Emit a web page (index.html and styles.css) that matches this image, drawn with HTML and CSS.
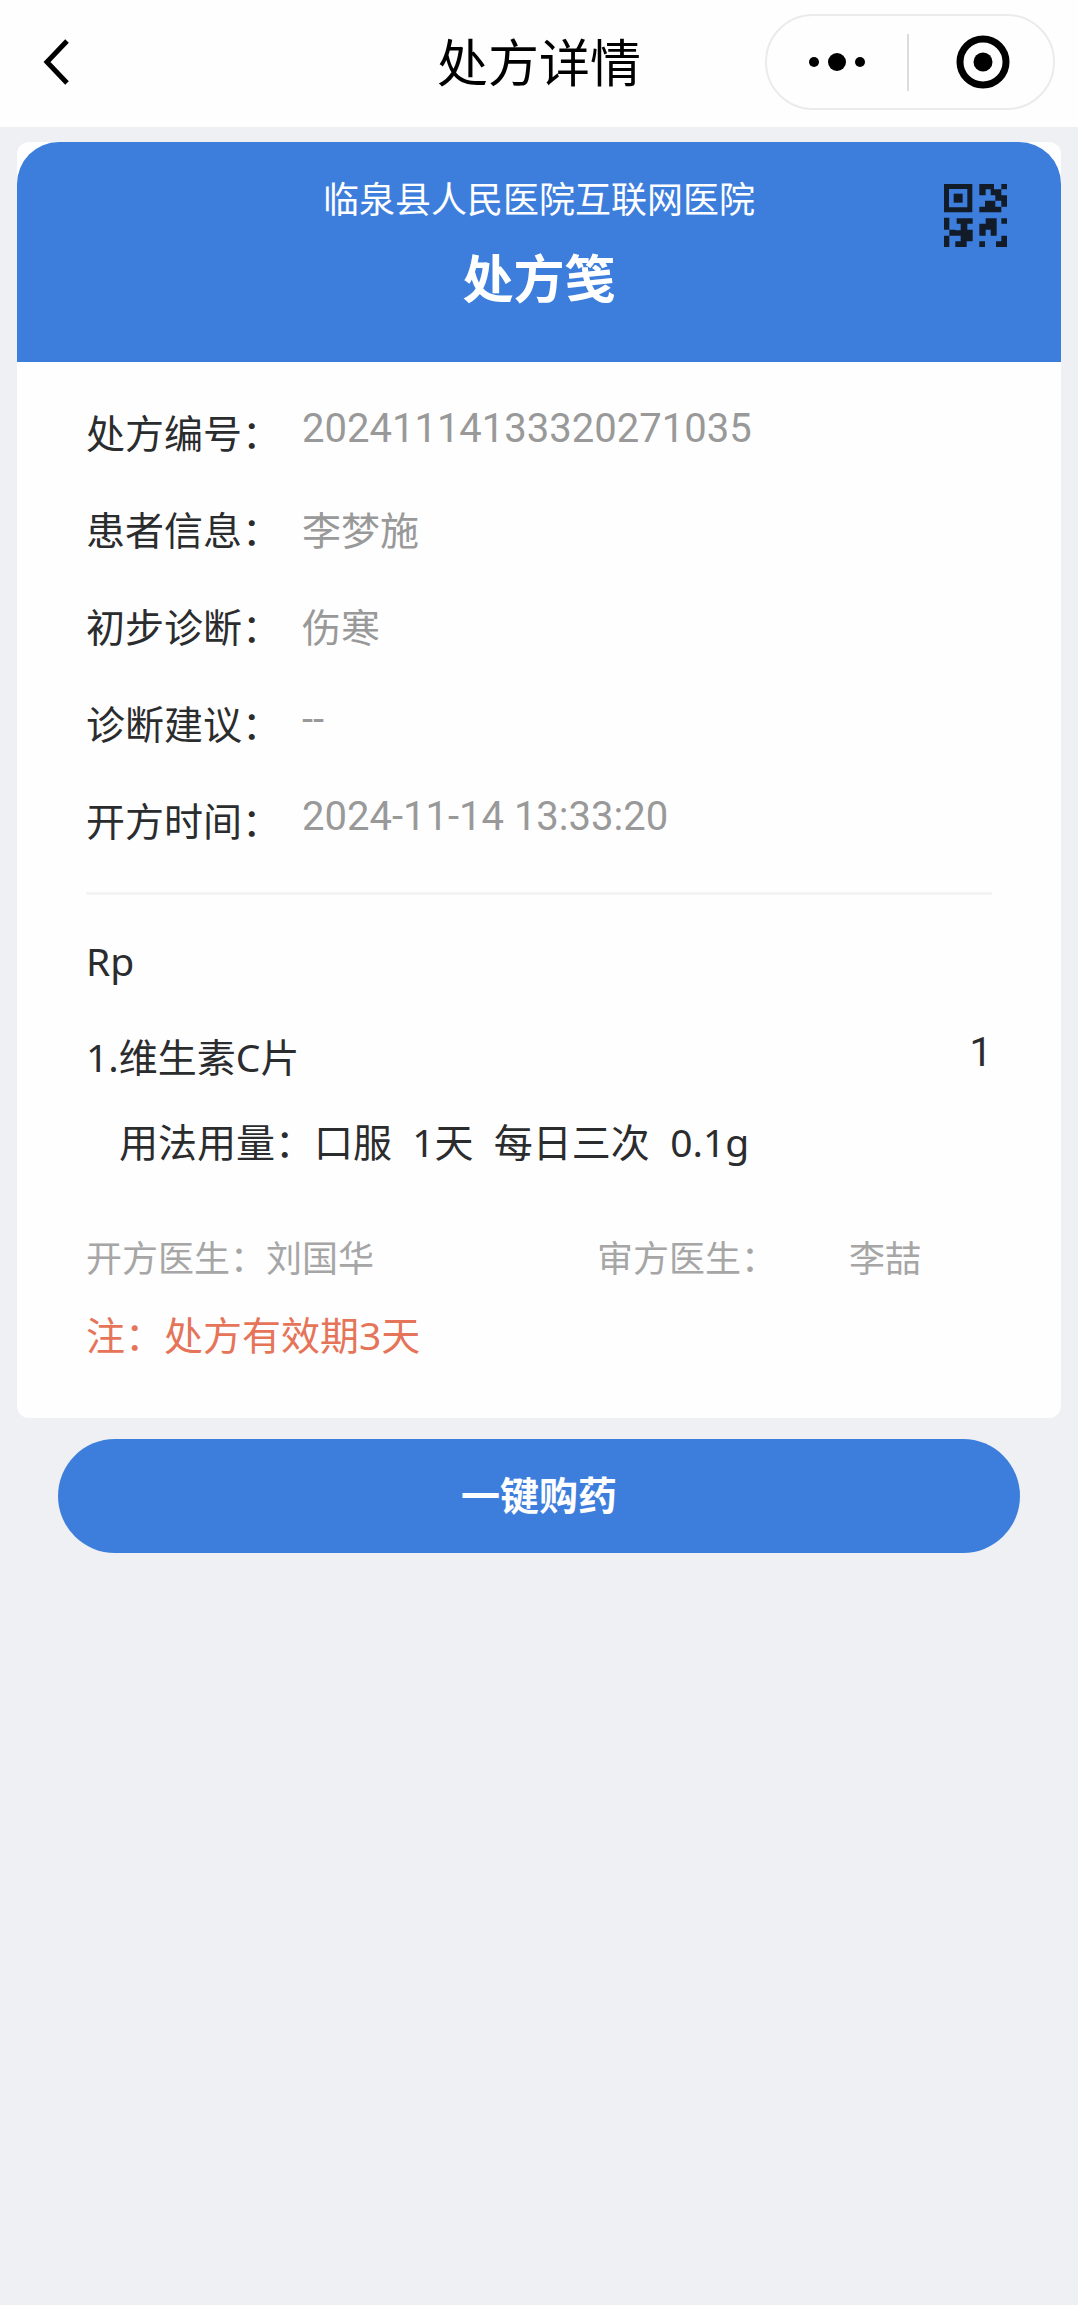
FILE: index.html
```html
<!DOCTYPE html>
<html lang="zh-CN">
<head>
<meta charset="utf-8">
<meta name="viewport" content="width=device-width, initial-scale=1">
<title>处方详情</title>
<link rel="stylesheet" href="styles.css">
</head>
<body>
<header class="topbar">
  <button class="icon-button back" type="button" aria-label="返回">
    <svg width="30" height="50" viewBox="0 0 30 50" fill="none" stroke="#000" stroke-width="5"><path d="M25 4 5 25l20 21"/></svg>
  </button>
  <h1 class="topbar-title">处方详情</h1>
  <div class="capsule">
    <button class="icon-button capsule-button" type="button" aria-label="更多">
      <svg width="56" height="20" viewBox="0 0 56 20"><circle cx="5" cy="10" r="5"/><circle cx="28" cy="10" r="9"/><circle cx="51" cy="10" r="5"/></svg>
    </button>
    <span class="capsule-line"></span>
    <button class="icon-button capsule-button capsule-close" type="button" aria-label="关闭">
      <svg width="54" height="54" viewBox="0 0 54 54"><circle cx="27" cy="27" r="23" fill="none" stroke="#000" stroke-width="7"/><circle cx="27" cy="27" r="9.5"/></svg>
    </button>
  </div>
</header>
<main class="page">
  <article class="card">
    <header class="card-head">
      <p class="hospital">临泉县人民医院互联网医院</p>
      <h2 class="card-title">处方笺</h2>
      <svg class="qr" viewBox="0 0 189 189" role="img" aria-label="二维码">
        <path fill-rule="evenodd" d="M0 0h85v85H0zM15 15v55h55V15z"/>
        <path d="M29 29h27v27H29z"/>
        <path d="M106 0h44v16h-25v18h-19zM172 0h17v16h-17zM140 16h16v18h-16zM154 16h18v18h17v34h-17V50h-18zM123 50h31v18h18v17h-47V68h-2zM106 68h19v17h-19z"/>
        <path d="M0 101h16v36H0zM16 137h18v18H16zM0 155h16v34H0zM38 103h48v16H70v18h16v35H68v17H34v-17h16v-17H34v-16h16v-20H38zM125 103h33v52h-18v-18h-15v18h-19v-36h19zM172 103h17v16h-17zM106 172h17v17h-17zM172 155h17v34h-33v-17h16z"/>
      </svg>
    </header>
    <div class="card-body">
      <dl class="fields">
        <div class="field"><dt>处方编号：</dt><dd class="latin">20241114133320271035</dd></div>
        <div class="field"><dt>患者信息：</dt><dd>李梦施</dd></div>
        <div class="field"><dt>初步诊断：</dt><dd>伤寒</dd></div>
        <div class="field"><dt>诊断建议：</dt><dd class="latin">--</dd></div>
        <div class="field"><dt>开方时间：</dt><dd class="latin">2024-11-14 13:33:20</dd></div>
      </dl>
      <section class="rp">
        <h3 class="rp-title">Rp</h3>
        <div class="drug"><span>1.维生素C片</span><span class="latin">1</span></div>
        <p class="usage">用法用量：口服&nbsp; 1天&nbsp; 每日三次&nbsp; 0.1g</p>
      </section>
      <div class="doctors">
        <p class="doctor"><span>开方医生：</span><span>刘国华</span></p>
        <p class="doctor reviewer"><span>审方医生：</span><span>李喆</span></p>
      </div>
      <p class="note">注：处方有效期3天</p>
    </div>
  </article>
  <button class="buy" type="button">一键购药</button>
</main>
</body>
</html>
```
FILE: styles.css
```css
* {
  box-sizing: border-box;
}

body,
h1,
h2,
h3,
p,
dl,
dd {
  margin: 0;
}

body {
  min-height: 100vh;
  background: #eef0f4;
  color: #2b2c2e;
  font-family: "Noto Sans", "Noto Sans CJK SC", sans-serif;
  font-size: 39px;
  line-height: 57px;
}

button {
  border: 0;
  padding: 0;
  font: inherit;
}

.topbar {
  display: grid;
  grid-template-columns: 1fr auto 1fr;
  align-items: center;
  padding: 14px 23px 17px 42px;
  background: #fefefe;
}

.topbar-title {
  color: #000;
  font-size: 51px;
  font-weight: 400;
  line-height: 76px;
  /* balances the different side paddings */
  margin-right: 19px;
}

.icon-button {
  display: flex;
  align-items: center;
  justify-content: center;
  background: none;
}

.back {
  justify-self: start;
}

.capsule {
  display: flex;
  align-items: center;
  justify-self: end;
  width: 290px;
  height: 96px;
  border: 2px solid #ebebeb;
  border-radius: 48px;
}

.capsule-button {
  flex: 1;
  height: 100%;
}

.capsule-close {
  padding-left: 4px;
}

.capsule-line {
  width: 2px;
  height: 57px;
  background: #dcdcdc;
}

.page {
  padding: 15px 17px;
}

.card {
  border-radius: 12px;
  background: #fefefe;
}

.card-head {
  position: relative;
  padding: 31px 0 46px;
  border-radius: 42px 42px 0 0;
  background: #3d7edd;
  color: #fff;
  text-align: center;
}

.hospital {
  font-size: 36px;
  line-height: 54px;
}

.card-title {
  margin-top: 13px;
  font-size: 51px;
  font-weight: 700;
  line-height: 76px;
}

.qr {
  position: absolute;
  top: 42px;
  right: 54px;
  width: 63px;
  height: 63px;
  fill: #121b28;
}

.card-body {
  padding: 42px 69px 55px;
}

.fields {
  display: grid;
  gap: 40px;
  padding-bottom: 43px;
  border-bottom: 3px solid #f4f4f5;
}

.field {
  display: flex;
  align-items: flex-start;
}

.field dt {
  flex: none;
  width: 216px;
}

.field dd {
  color: #999;
}

/* digits and dashes sit on a shorter line than Chinese text */
.latin {
  font-family: Roboto, sans-serif;
  font-size: 40px;
  line-height: 50px;
}

.rp {
  padding-top: 37px;
}

.rp-title {
  font-size: 39px;
  font-weight: 400;
}

.drug {
  display: flex;
  align-items: flex-start;
  justify-content: space-between;
  margin-top: 39px;
}

.usage {
  margin-top: 28px;
  padding-left: 33px;
}

.doctors {
  display: grid;
  grid-template-columns: 511px 1fr;
  margin-top: 62px;
  color: #a6a6a6;
  font-size: 36px;
  line-height: 53px;
}

.doctor {
  display: flex;
}

.reviewer {
  gap: 72px;
}

.note {
  margin-top: 21px;
  color: #e57459;
}

.buy {
  display: block;
  width: calc(100% - 82px);
  height: 114px;
  margin: 21px auto 0;
  padding-bottom: 4px;
  border-radius: 57px;
  background: #3d7edd;
  color: #fff;
  font-weight: 700;
}
```
